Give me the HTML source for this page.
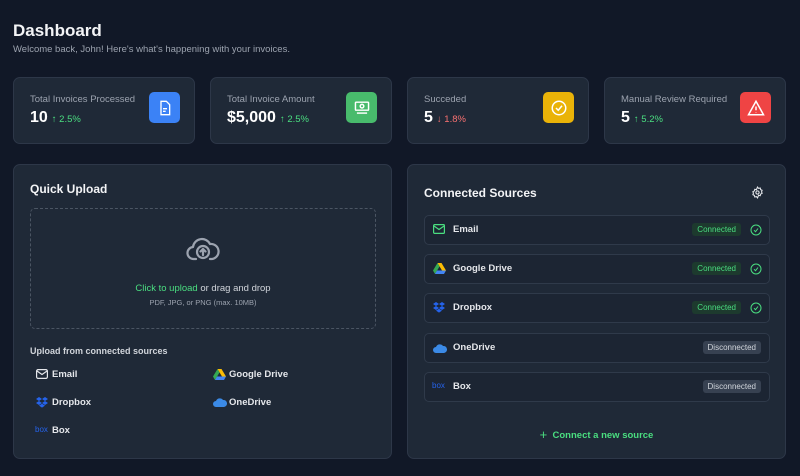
<!DOCTYPE html>
<html><head><meta charset="utf-8"><style>
*{box-sizing:border-box;margin:0;padding:0}
body{width:800px;height:476px;background:#111827;font-family:"Liberation Sans",sans-serif;color:#f3f4f6;position:relative;overflow:hidden}
.a{position:absolute}
.card{position:absolute;background:#1f2937;border:1px solid #2d3748;border-radius:7px}
.lbl{font-size:9.5px;color:#9ca3af}
.val{font-size:16px;font-weight:bold;color:#fff}
.pct{font-size:9.5px;margin-left:4px;font-weight:normal}
.ic{position:absolute;width:31px;height:31px;border-radius:5px;display:flex;align-items:center;justify-content:center}
.row{position:absolute;left:16px;width:346px;height:30px;border:1px solid #2f3a4a;border-radius:5px;background:#1c2533}
.row .n{position:absolute;left:28px;top:8px;font-size:9.5px;font-weight:bold;color:#e5e7eb}
.row .i{position:absolute;left:8px;top:8px}
.badge{position:absolute;top:7px;font-size:8px;padding:2px 5px;border-radius:3px}
.con{right:28px;background:#1d3a2e;color:#4ade80}
.dis{right:8px;background:#374151;color:#d1d5db}
.chk{position:absolute;right:7px;top:8px}
.src{position:absolute;font-size:9.5px;font-weight:bold;color:#e5e7eb}
</style></head><body>
<div class="a" style="left:13px;top:21px;font-size:17px;font-weight:bold">Dashboard</div>
<div class="a" style="left:13px;top:44px;font-size:9.5px;color:#9ca3af">Welcome back, John! Here's what's happening with your invoices.</div>

<div class="card" style="left:13px;top:77px;width:182px;height:67px">
 <div class="a lbl" style="left:16px;top:16px">Total Invoices Processed</div>
 <div class="a val" style="left:16px;top:31px">10<span class="pct" style="color:#4ade80">↑ 2.5%</span></div>
 <div class="ic" style="left:135px;top:14px;background:#3b82f6"><svg width="16" height="16" viewBox="0 0 24 24" fill="none" stroke="#fff" stroke-width="2"><path d="M6 2h8l5 5v15H6z"/><path d="M9 13h6M9 17h4"/></svg></div>
</div>
<div class="card" style="left:210px;top:77px;width:182px;height:67px">
 <div class="a lbl" style="left:16px;top:16px">Total Invoice Amount</div>
 <div class="a val" style="left:16px;top:31px">$5,000<span class="pct" style="color:#4ade80">↑ 2.5%</span></div>
 <div class="ic" style="left:135px;top:14px;background:#48bb6c"><svg width="18" height="16" viewBox="0 0 24 22" fill="none" stroke="#fff" stroke-width="2"><rect x="3" y="3" width="18" height="11" rx="1"/><circle cx="12" cy="8.5" r="2.5"/><path d="M5 18h14"/></svg></div>
</div>
<div class="card" style="left:407px;top:77px;width:182px;height:67px">
 <div class="a lbl" style="left:16px;top:16px">Succeded</div>
 <div class="a val" style="left:16px;top:31px">5<span class="pct" style="color:#f87171">↓ 1.8%</span></div>
 <div class="ic" style="left:135px;top:14px;background:#eab308"><svg width="18" height="18" viewBox="0 0 24 24" fill="none" stroke="#fff" stroke-width="2"><circle cx="12" cy="12" r="9"/><path d="M8 12l3 3 5-6"/></svg></div>
</div>
<div class="card" style="left:604px;top:77px;width:182px;height:67px">
 <div class="a lbl" style="left:16px;top:16px">Manual Review Required</div>
 <div class="a val" style="left:16px;top:31px">5<span class="pct" style="color:#4ade80">↑ 5.2%</span></div>
 <div class="ic" style="left:135px;top:14px;background:#ef4444"><svg width="18" height="18" viewBox="0 0 24 24" fill="none" stroke="#fff" stroke-width="2"><path d="M12 3L2 21h20z"/><path d="M12 10v5M12 18v.5"/></svg></div>
</div>

<div class="card" style="left:13px;top:164px;width:379px;height:295px">
 <div class="a" style="left:16px;top:17px;font-size:12px;font-weight:bold">Quick Upload</div>
 <div class="a" style="left:16px;top:43px;width:346px;height:121px;border:1px dashed #4b5563;border-radius:5px">
  <svg class="a" style="left:155px;top:26px" width="34" height="28" viewBox="0 0 34 28" fill="none" stroke="#9ca3af" stroke-width="2.2" stroke-linecap="round" stroke-linejoin="round"><path d="M10 24H8a6 6 0 0 1-1-12 9 9 0 0 1 17-3 7 7 0 0 1 2 15h-2"/><circle cx="17" cy="17" r="6"/><path d="M17 20v-6M14.5 16.5L17 14l2.5 2.5"/></svg>
  <div class="a" style="left:0;width:100%;top:74px;text-align:center;font-size:9.5px;color:#d1d5db"><span style="color:#4ade80">Click to upload</span> or drag and drop</div>
  <div class="a" style="left:0;width:100%;top:89px;text-align:center;font-size:7.5px;color:#9ca3af">PDF, JPG, or PNG (max. 10MB)</div>
 </div>
 <div class="a" style="left:16px;top:181px;font-size:9px;color:#d1d5db;font-weight:bold">Upload from connected sources</div>
 <svg class="a" style="left:22px;top:204px" width="12" height="10" viewBox="0 0 12 10" fill="none" stroke="#e5e7eb" stroke-width="1.2"><rect x=".6" y=".6" width="10.8" height="8.8" rx="1.5"/><path d="M1 2l5 3.5L11 2"/></svg>
 <div class="src" style="left:38px;top:204px">Email</div>
 <svg class="a" style="left:22px;top:232px" width="12" height="11" viewBox="0 0 12 11" fill="#2563eb"><path d="M3 0l3 2-3 2-3-2zM9 0l3 2-3 2-3-2zM3 4l3 2-3 2-3-2zM9 4l3 2-3 2-3-2zM3 8.6l3-1.8 3 1.8-3 2z"/></svg>
 <div class="src" style="left:38px;top:232px">Dropbox</div>
 <div class="a" style="left:21px;top:260px;font-size:8px;color:#2563eb">box</div>
 <div class="src" style="left:38px;top:260px">Box</div>
 <svg class="a" style="left:199px;top:204px" width="13" height="11" viewBox="0 0 13 11"><path d="M4.5 0h4l4.5 7.5h-4z" fill="#fbbc04"/><path d="M4.5 0L0 7.5l2 3.5 4.5-7.5z" fill="#34a853"/><path d="M2 11h9l2-3.5H4z" fill="#4285f4"/></svg>
 <div class="src" style="left:215px;top:204px">Google Drive</div>
 <svg class="a" style="left:199px;top:233px" width="14" height="9" viewBox="0 0 14 9"><path d="M3 9a3 3 0 0 1 0-6 4 4 0 0 1 7-1 3.5 3.5 0 0 1 1 7z" fill="#3b8ae6"/></svg>
 <div class="src" style="left:215px;top:232px">OneDrive</div>
</div>

<div class="card" style="left:407px;top:164px;width:379px;height:295px">
 <div class="a" style="left:16px;top:21px;font-size:12px;font-weight:bold">Connected Sources</div>
 <svg class="a" style="left:343px;top:21px" width="13" height="13" viewBox="0 0 24 24" fill="none" stroke="#e5e7eb" stroke-width="2"><circle cx="12" cy="12" r="3"/><path d="M12 2l2 2.5 3-.8.8 3 2.7 1.3-1 2.8 1 2.8-2.7 1.3-.8 3-3-.8L12 22l-2-2.5-3 .8-.8-3-2.7-1.3 1-2.8-1-2.8 2.7-1.3.8-3 3 .8z"/></svg>
 <div class="row" style="top:50px"><svg class="i" width="12" height="10" viewBox="0 0 12 10" fill="none" stroke="#4ade80" stroke-width="1.2"><rect x=".6" y=".6" width="10.8" height="8.8" rx="1"/><path d="M1 2l5 3.5L11 2"/></svg><div class="n">Email</div><div class="badge con">Connected</div><svg class="chk" width="12" height="12" viewBox="0 0 12 12" fill="none" stroke="#4ade80" stroke-width="1"><circle cx="6" cy="6" r="5"/><path d="M4 6.2l1.5 1.5L8 4.5"/></svg></div>
 <div class="row" style="top:89px"><svg class="i" width="13" height="11" viewBox="0 0 13 11"><path d="M4.5 0h4l4.5 7.5h-4z" fill="#fbbc04"/><path d="M4.5 0L0 7.5l2 3.5 4.5-7.5z" fill="#34a853"/><path d="M2 11h9l2-3.5H4z" fill="#4285f4"/></svg><div class="n">Google Drive</div><div class="badge con">Connected</div><svg class="chk" width="12" height="12" viewBox="0 0 12 12" fill="none" stroke="#4ade80" stroke-width="1"><circle cx="6" cy="6" r="5"/><path d="M4 6.2l1.5 1.5L8 4.5"/></svg></div>
 <div class="row" style="top:128px"><svg class="i" width="12" height="11" viewBox="0 0 12 11" fill="#2563eb"><path d="M3 0l3 2-3 2-3-2zM9 0l3 2-3 2-3-2zM3 4l3 2-3 2-3-2zM9 4l3 2-3 2-3-2zM3 8.6l3-1.8 3 1.8-3 2z"/></svg><div class="n">Dropbox</div><div class="badge con">Connected</div><svg class="chk" width="12" height="12" viewBox="0 0 12 12" fill="none" stroke="#4ade80" stroke-width="1"><circle cx="6" cy="6" r="5"/><path d="M4 6.2l1.5 1.5L8 4.5"/></svg></div>
 <div class="row" style="top:168px"><svg class="i" style="top:10px" width="14" height="9" viewBox="0 0 14 9"><path d="M3 9a3 3 0 0 1 0-6 4 4 0 0 1 7-1 3.5 3.5 0 0 1 1 7z" fill="#3b8ae6"/></svg><div class="n">OneDrive</div><div class="badge dis">Disconnected</div></div>
 <div class="row" style="top:207px"><div class="a" style="left:7px;top:8px;font-size:8px;color:#2563eb">box</div><div class="n">Box</div><div class="badge dis">Disconnected</div></div>
 <div class="a" style="left:0;width:100%;top:262px;text-align:center;font-size:9.5px;color:#4ade80;font-weight:bold"><span style="font-size:13px;font-weight:normal;vertical-align:-1px">+</span>&nbsp; Connect a new source</div>
</div>
</body></html>
